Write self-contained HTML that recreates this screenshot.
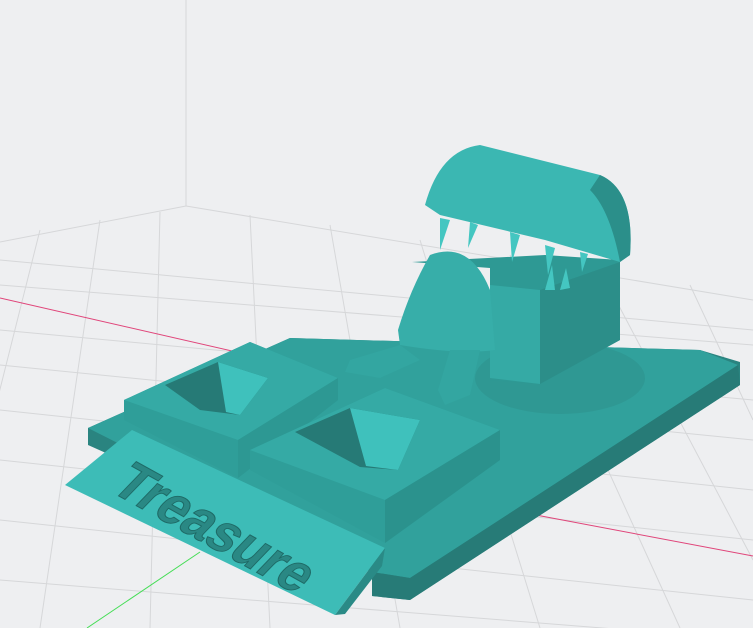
<!DOCTYPE html><html><head><style>html,body{margin:0;padding:0;background:#eeeff1;overflow:hidden}svg{display:block}</style></head><body>
<svg width="753" height="628" viewBox="0 0 753 628" xmlns="http://www.w3.org/2000/svg">
<rect width="753" height="628" fill="#eeeff1"/>
<g stroke="#d6d7d9" stroke-width="1" fill="none">
<line x1="186" y1="0" x2="186" y2="206"/>
<line x1="186" y1="206" x2="0" y2="242"/>
<line x1="186" y1="206" x2="753" y2="300"/>
<path d="M0 260 L753 330 M0 285 L753 345 M0 330 L753 400 M0 365 L753 440 M0 410 L753 490 M0 460 L753 540 M0 520 L753 600 M0 580 L753 640"/>
<path d="M40 230 L-60 628 M100 220 L40 628 M160 212 L150 628 M250 215 L270 628 M330 225 L400 628 M420 240 L540 628 M510 255 L680 628 M600 270 L753 560 M690 285 L753 420"/>
</g>
<line x1="0" y1="298" x2="350" y2="378" stroke="#e0457a" stroke-width="1"/>
<line x1="520" y1="512" x2="753" y2="556" stroke="#e0457a" stroke-width="1"/>
<line x1="87" y1="628" x2="200" y2="552" stroke="#44dd55" stroke-width="1"/>
<polygon points="88,428 290,338 700,350 740,362 740,385 410,600 372,596 372,572 88,445" fill="#2a8480"/>
<polygon points="88,428 290,338 700,350 738,365 410,578 372,572" fill="#31a19c"/>
<polygon points="372,572 410,578 738,365 740,385 410,600 372,596" fill="#277b77"/>
<ellipse cx="560" cy="378" rx="85" ry="36" fill="#2f9893"/>
<polygon points="65,485 132,430 385,548 335,615" fill="#3dbcb7"/>
<polygon points="335,615 385,548 382,566 345,614" fill="#2a8a86"/>
<text x="0" y="0" transform="translate(108,490) rotate(29) skewX(-15)" font-family="Liberation Sans,sans-serif" font-weight="bold" font-size="56" fill="#2a8884" stroke="#1e6a66" stroke-width="1" textLength="215" lengthAdjust="spacingAndGlyphs">Treasure</text>
<polygon points="124,400 250,342 338,378 338,400 238,478 124,420" fill="#2f9e99"/>
<polygon points="124,400 250,342 338,378 238,440" fill="#35aaa5"/>
<polygon points="238,440 338,378 338,400 238,478" fill="#2d9893"/>
<polygon points="165,385 218,362 268,378 240,415 200,410" fill="#267a76"/>
<polygon points="218,362 268,378 240,415 226,412" fill="#3fc1bc"/>
<polygon points="250,450 385,388 500,430 500,460 385,543 250,470" fill="#2f9e99"/>
<polygon points="250,450 385,388 500,430 385,500" fill="#35aaa5"/>
<polygon points="385,500 500,430 500,460 385,543" fill="#2b928d"/>
<polygon points="295,432 350,408 420,420 398,470 360,467" fill="#267a76"/>
<polygon points="350,408 420,420 398,470 366,466" fill="#3fc1bc"/>
<polygon points="412,262 490,268 490,380 540,384 620,340 620,260 545,255" fill="#2e9994"/>
<polygon points="490,285 540,290 540,384 490,378" fill="#35aaa5"/>
<polygon points="540,290 620,262 620,340 540,384" fill="#2c8e89"/>
<path d="M425 205 Q440 150 480 145 L600 175 Q635 190 630 255 L620 262 L545 240 L440 215 Z" fill="#3bb7b2"/>
<path d="M600 175 Q635 190 630 255 L620 262 Q610 210 590 190 Z" fill="#2b8f8a"/>
<path d="M430 255 Q470 240 490 290 L495 350 Q460 355 400 345 L398 330 Q410 290 430 255 Z" fill="#37aea9"/>
<path d="M350 360 L400 345 L420 360 L380 378 L345 372 Z" fill="#33a6a1"/>
<path d="M450 350 L480 350 L470 395 L445 405 L438 390 Z" fill="#33a6a1"/>
<g fill="#44c6c1"><polygon points="440,218 450,220 440,250"/><polygon points="470,222 478,225 468,248"/><polygon points="510,232 520,235 512,262"/><polygon points="545,245 555,248 548,275"/><polygon points="580,252 588,254 582,272"/><polygon points="545,290 555,290 552,265"/><polygon points="560,290 570,288 566,268"/></g>
</svg>
</body></html>
